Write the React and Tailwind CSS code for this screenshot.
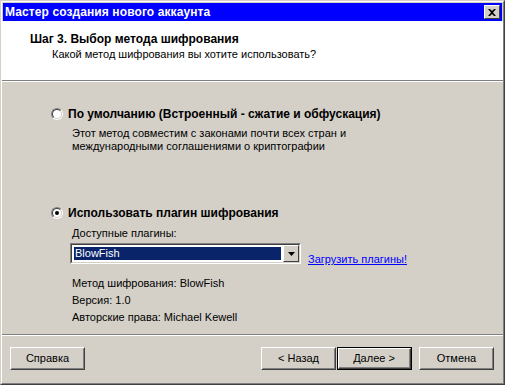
import React from "react";

const font = { fontFamily: '"Liberation Sans", Arial, sans-serif' };

function Radio({ checked }) {
  return (
    <div className="w-[12px] h-[12px] rounded-full border border-t-[#808080] border-l-[#808080] border-r-white border-b-white shrink-0">
      <div className="w-full h-full rounded-full border border-t-[#404040] border-l-[#404040] border-r-[#d4d0c8] border-b-[#d4d0c8] bg-white flex items-center justify-center">
        {checked && <div className="w-[4px] h-[4px] rounded-full bg-black" />}
      </div>
    </div>
  );
}

function Button({ children, isDefault, className = "" }) {
  const inner = (
    <div className="h-full border border-t-white border-l-white border-r-[#404040] border-b-[#404040]">
      <div className="h-full flex items-center justify-center border border-t-[#d4d0c8] border-l-[#d4d0c8] border-r-[#808080] border-b-[#808080] text-[11px] text-black">
        {children}
      </div>
    </div>
  );
  if (isDefault) {
    return (
      <div className={"w-[75px] h-[23px] border border-black " + className}>
        <div className="h-full border-t border-l border-t-white border-l-white border-r border-b border-r-[#404040] border-b-[#404040]">
          <div className="h-full flex items-center justify-center border-r border-b border-r-[#808080] border-b-[#808080] text-[11px] text-black">
            {children}
          </div>
        </div>
      </div>
    );
  }
  return <div className={"w-[75px] h-[23px] " + className}>{inner}</div>;
}

export default function App() {
  return (
    <div style={font} className="w-[505px] h-[385px] bg-[#d4d0c8] border border-t-[#d4d0c8] border-l-[#d4d0c8] border-r-[#404040] border-b-[#404040]">
      <div className="h-full border border-t-white border-l-white border-r-[#808080] border-b-[#808080] p-[1px] flex flex-col">
        {/* title bar */}
        <div className="h-[18px] bg-[#0000ff] flex items-center justify-between pl-[2px] pr-[2px]">
          <span className="text-white text-[12px] font-bold tracking-[0.1px]">Мастер создания нового аккаунта</span>
          <div className="w-[16px] h-[14px] bg-[#d4d0c8] border border-t-white border-l-white border-r-[#404040] border-b-[#404040] flex items-center justify-center">
            <svg width="8" height="7" viewBox="0 0 8 7">
              <path d="M0 0h2l2 2 2-2h2L5 3.5 8 7H6L4 5 2 7H0l3-3.5z" fill="#000" />
            </svg>
          </div>
        </div>

        {/* header */}
        <div className="h-[59px] bg-white ml-[-1px] mr-[-1px] pl-[28px] pt-[11px]">
          <div className="text-[12px] font-bold text-black leading-[14px]">Шаг 3. Выбор метода шифрования</div>
          <div className="text-[11px] text-black pl-[22px] mt-[1px] leading-[14px]">Какой метод шифрования вы хотите использовать?</div>
        </div>
        <div className="h-[1px] bg-[#808080] ml-[-1px] mr-[-1px]" />
        <div className="h-[1px] bg-white ml-[-1px] mr-[-1px]" />

        {/* body */}
        <div className="flex-1 pl-[48px] pt-[25px]">
          <div className="flex items-center gap-[5px] h-[14px]">
            <Radio />
            <span className="text-[12px] font-bold text-black">По умолчанию (Встроенный - сжатие и обфускация)</span>
          </div>
          <div className="pl-[21px] mt-[6px] text-[11px] text-black leading-[13px]">
            <div>Этот метод совместим с законами почти всех стран и</div>
            <div>международными соглашениями о криптографии</div>
          </div>

          <div className="flex items-center gap-[5px] h-[14px] mt-[53px]">
            <Radio checked />
            <span className="text-[12px] font-bold text-black">Использовать плагин шифрования</span>
          </div>
          <div className="pl-[21px] mt-[7px] text-[11px] text-black leading-[13px]">Доступные плагины:</div>
          <div className="flex items-end gap-[7px] pl-[19px] mt-[3px]">
            <div className="w-[231px] h-[21px] border border-t-[#808080] border-l-[#808080] border-r-white border-b-white">
              <div className="h-full flex border border-t-[#404040] border-l-[#404040] border-r-[#d4d0c8] border-b-[#d4d0c8] bg-white">
                <div className="flex-1 p-[2px]">
                  <div className="h-full bg-[#0a246a] text-white text-[11px] flex items-center pl-[1px]">BlowFish</div>
                </div>
                <div className="w-[16px] h-full bg-[#d4d0c8] border border-t-white border-l-white border-r-[#404040] border-b-[#404040] flex items-center justify-center">
                  <svg width="7" height="4" viewBox="0 0 7 4">
                    <path d="M0 0h7L3.5 4z" fill="#000" />
                  </svg>
                </div>
              </div>
            </div>
            <a className="text-[11px] text-[#0000ff] underline leading-[13px] mb-[-2px]">Загрузить плагины!</a>
          </div>
          <div className="pl-[21px] mt-[11px] text-[11px] text-black leading-[17px]">
            <div>Метод шифрования: BlowFish</div>
            <div>Версия: 1.0</div>
            <div>Авторские права: Michael Kewell</div>
          </div>
        </div>

        {/* footer */}
        <div className="h-[1px] bg-[#808080] ml-[-1px] mr-[-1px]" />
        <div className="h-[1px] bg-white ml-[-1px] mr-[-1px]" />
        <div className="h-[46px] flex items-start pt-[11px] pl-[7px] pr-[8px]">
          <Button>Справка</Button>
          <div className="flex-1" />
          <Button>&lt; Назад</Button>
          <Button isDefault className="ml-[1px]">Далее &gt;</Button>
          <Button className="ml-[7px]">Отмена</Button>
        </div>
      </div>
    </div>
  );
}
